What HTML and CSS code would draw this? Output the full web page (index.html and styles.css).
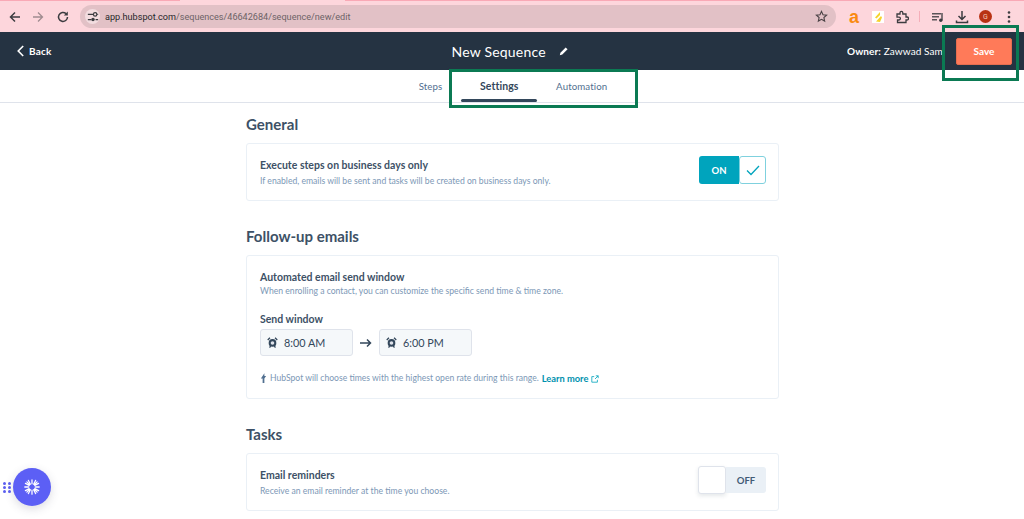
FILE: index.html
```html
<!DOCTYPE html>
<html lang="en">
<head>
<meta charset="utf-8">
<title>New Sequence</title>
<link rel="stylesheet" href="styles.css">
</head>
<body>
<div class="page">
  <header class="chrome">
    <div class="tabstrip"><span class="strip-a"></span><span class="strip-b"></span><span class="strip-c"></span></div>
    <div class="toolbar">
      <svg class="ic back-ic" viewBox="0 0 14 14"><path d="M12 7H2.500M7 2.500 2.500 7 7 11.500" fill="none" stroke="#3c3c40" stroke-width="1.500"/></svg>
      <svg class="ic fwd-ic" viewBox="0 0 14 14"><path d="M2 7h9.500M7 2.500 11.500 7 7 11.500" fill="none" stroke="#a08c90" stroke-width="1.300"/></svg>
      <svg class="ic reload-ic" viewBox="0 0 14 14"><path d="M11.500 7A4.500 4.500 0 1 1 10 3.600" fill="none" stroke="#3c3c40" stroke-width="1.500"/><path d="M11.800 1.500v4h-4z" fill="#3c3c40"/></svg>
      <div class="omnibox">
        <span class="tune">
          <svg viewBox="0 0 14 14" width="12" height="12"><path d="M1 4h6M1 10h4M10 10h3M12 4h1" stroke="#3c3c40" stroke-width="1.500"/><circle cx="9.500" cy="4" r="2" fill="none" stroke="#3c3c40" stroke-width="1.400"/><circle cx="7" cy="10" r="2" fill="#3c3c40"/></svg>
        </span>
        <span class="url"><b>app.hubspot.com</b>/sequences/46642684/sequence/new/edit</span>
        <svg class="star" viewBox="0 0 14 14"><path d="M7 1.500l1.600 3.600 3.900.4-2.900 2.600.8 3.800L7 10l-3.400 1.900.8-3.800L1.500 5.500l3.900-.4z" fill="none" stroke="#4a4245" stroke-width="1.200"/></svg>
      </div>
      <div class="exts">
        <span class="ext-a">a</span>
        <span class="ext-y"><svg viewBox="0 0 12 12" width="12" height="12"><path d="M8 1 3 6.500l1.500 1L8 4zM9 5 4 10.500 8 11l2-4.500z" fill="#f6d32d"/></svg></span>
        <svg class="ic" viewBox="0 0 14 14"><path d="M2 4h3V2.800a1.400 1.400 0 0 1 2.800 0V4H11v3h1a1.500 1.500 0 0 1 0 3h-1v2.500H2.500V10H4a1.400 1.400 0 0 0 0-2.800H2z" fill="none" stroke="#3c3c40" stroke-width="1.300"/></svg>
        <span class="sep"></span>
        <svg class="ic" viewBox="0 0 14 14"><path d="M1 3h9v1.500H1zM1 6h7v1.500H1zM1 9h5v1.500H1z" fill="#5a5458"/><path d="M11 3v7" stroke="#3c3c40" stroke-width="1.300"/><circle cx="9.800" cy="10.300" r="1.700" fill="#3c3c40"/></svg>
        <svg class="ic" viewBox="0 0 14 14"><path d="M7 1v8M3.500 6 7 9.500 10.500 6M1.500 10.500v2h11v-2" fill="none" stroke="#3c3c40" stroke-width="1.500"/></svg>
        <span class="avatar">G</span>
        <svg class="ic dots-ic" viewBox="0 0 14 14"><circle cx="7" cy="2.500" r="1.300" fill="#3c3c40"/><circle cx="7" cy="7" r="1.300" fill="#3c3c40"/><circle cx="7" cy="11.500" r="1.300" fill="#3c3c40"/></svg>
      </div>
    </div>
  </header>

  <nav class="appbar">
    <a class="backlink"><svg viewBox="0 0 10 14" width="9" height="14"><path d="M8 1.500 2.500 7 8 12.500" fill="none" stroke="#fff" stroke-width="1.800"/></svg>Back</a>
    <div class="title">New Sequence
      <svg class="pencil" viewBox="0 0 12 12" width="10" height="10"><path d="M1 11l.7-3L8 1.700l2.300 2.300L4 10.300z" fill="#fff"/></svg>
    </div>
    <div class="owner"><b>Owner:</b> Zawwad Sam</div>
    <button class="save">Save</button>
  </nav>

  <div class="tabs">
    <span class="tab">Steps</span>
    <span class="tab active">Settings</span>
    <span class="tab">Automation</span>
  </div>

  <main class="content">
    <h2>General</h2>
    <section class="card row">
      <div>
        <h3>Execute steps on business days only</h3>
        <p>If enabled, emails will be sent and tasks will be created on business days only.</p>
      </div>
      <div class="toggle on"><span class="label">ON</span><span class="knob"><svg viewBox="0 0 16 16" width="16" height="16"><path d="M2 8.500 6 12.500 14 4" fill="none" stroke="#00a4bd" stroke-width="1.300"/></svg></span></div>
    </section>

    <h2>Follow-up emails</h2>
    <section class="card window">
      <h3>Automated email send window</h3>
      <p>When enrolling a contact, you can customize the specific send time &amp; time zone.</p>
      <label>Send window</label>
      <div class="times">
        <div class="time"><svg viewBox="0 0 12 12" width="11" height="11"><circle cx="6" cy="6.500" r="4.200" fill="#33475b"/><circle cx="6" cy="6.500" r="2" fill="#dfe3eb"/><path d="M.8 3.200 3.200.8M11.200 3.200 8.800.8M2.800 11.500l1.200-1.700M9.200 11.500 8 9.800" stroke="#33475b" stroke-width="1.400"/></svg>8:00 AM</div>
        <svg class="arrow" viewBox="0 0 12 10" width="12" height="10"><path d="M0 5h10.500M7 1.500 10.500 5 7 8.500" fill="none" stroke="#33475b" stroke-width="1.500"/></svg>
        <div class="time"><svg viewBox="0 0 12 12" width="11" height="11"><circle cx="6" cy="6.500" r="4.200" fill="#33475b"/><circle cx="6" cy="6.500" r="2" fill="#dfe3eb"/><path d="M.8 3.200 3.200.8M11.200 3.200 8.800.8M2.800 11.500l1.200-1.700M9.200 11.500 8 9.800" stroke="#33475b" stroke-width="1.400"/></svg>6:00 PM</div>
      </div>
      <p class="hint"><svg viewBox="0 0 8 12" width="7" height="11"><path d="M5 0 1 6h2v5h2V6l2-3H5z" fill="#516f90"/></svg>HubSpot will choose times with the highest open rate during this range. <a>Learn more</a> <svg class="ext" viewBox="0 0 10 10" width="8" height="8"><path d="M4 2H1v7h7V6M5 5l4-4M6 1h3v3" fill="none" stroke="#00a4bd" stroke-width="1"/></svg></p>
    </section>

    <h2>Tasks</h2>
    <section class="card row">
      <div>
        <h3>Email reminders</h3>
        <p>Receive an email reminder at the time you choose.</p>
      </div>
      <div class="toggle off"><span class="knob"></span><span class="label">OFF</span></div>
    </section>
  </main>

  <div class="frame frame-tabs"></div>
  <div class="frame frame-save"></div>

  <div class="grip"><i></i><i></i><i></i><i></i><i></i><i></i></div>
  <div class="fab"><svg viewBox="0 0 20 20" width="16" height="16"><g stroke="#fff" stroke-width="1.600" stroke-linecap="round"><path d="M10 1v5M10 14v5M1 10h5M14 10h5M3.600 3.600 7 7M13 13l3.400 3.400M16.400 3.600 13 7M7 13l-3.400 3.400M5.500 1.800 8 6.500M12 13.500l2.500 4.700M14.500 1.800 12 6.500M8 13.500l-2.500 4.700M1.800 5.500 6.500 8M13.500 12l4.700 2.500M18.200 5.500 13.500 8M6.500 12l-4.700 2.500"/></g></svg></div>
</div>
</body>
</html>
```
FILE: styles.css
```css
* { box-sizing: border-box; }
html, body { margin: 0; padding: 0; background: #fff; }
body { font-family: "Lato", "Liberation Sans", sans-serif; color: #33475b; }
.page { position: relative; width: 1024px; height: 519px; overflow: hidden; background: #fff; }

.chrome { height: 32px; background: #fdd6dc; }
.tabstrip { display: flex; height: 1px; }
.strip-a { width: 180px; background: #f9a9b6; }
.strip-b { width: 165px; background: #fdd6dc; }
.strip-c { flex: 1; background: #f9a9b6; }
.toolbar { display: flex; align-items: center; height: 31px; padding: 0 7px 0 8px; }
.ic { width: 14px; height: 14px; flex: none; }
.fwd-ic { margin-left: 9px; }
.reload-ic { margin-left: 11px; }
.omnibox { display: flex; align-items: center; width: 756px; height: 23px; margin-left: 10px; padding: 0 8px 0 5px; border-radius: 12px; background: #e2c1c6; }
.tune { display: flex; align-items: center; justify-content: center; width: 15px; height: 15px; border-radius: 50%; background: #f3dde0; }
.url { flex: 1; margin-left: 5px; font-family: "Roboto", sans-serif; font-size: 9.100px; color: #6d6367; }
.url b { font-weight: 400; color: #27272a; }
.star { width: 13px; height: 13px; }
.exts { display: flex; align-items: center; margin-left: 11px; }
.ext-a { width: 14px; font-family: "Liberation Sans", sans-serif; font-size: 18px; font-weight: 700; line-height: 16px; text-align: center; color: #f98a10; }
.ext-y { display: flex; width: 12px; height: 12px; margin-left: 11px; background: #fff; }
.exts .ic { margin-left: 0; }
.ext-y + .ic { margin-left: 11px; }
.sep { width: 1px; height: 11px; margin: 0 11px 0 10px; background: #f5aeb9; }
.sep + .ic + .ic { margin-left: 10px; }
.avatar { display: flex; align-items: center; justify-content: center; width: 13px; height: 13px; margin-left: 10px; border-radius: 50%; background: #b83213; font-family: "Roboto", sans-serif; font-size: 7px; color: #f6c9b8; }
.dots-ic { margin-left: 10px !important; }

.appbar { display: flex; align-items: center; position: relative; height: 38px; padding: 0 12px 0 16px; background: #253342; color: #fff; }
.backlink { display: flex; align-items: center; gap: 4px; font-size: 10px; font-weight: 700; letter-spacing: .2px; color: #fff; }
.title { display: flex; align-items: center; gap: 13px; margin-left: 400px; font-size: 14px; letter-spacing: .2px; }
.owner { margin-left: auto; width: 95px; overflow: hidden; white-space: nowrap; font-size: 10px; letter-spacing: .1px; }
.save { width: 56px; height: 27px; margin-left: 14px; padding: 0; border: 1px solid #e66e50; border-radius: 2px; background: #ff7a59; font: 700 10px "Lato", sans-serif; color: #fff; }

.tabs { display: flex; justify-content: center; align-items: center; gap: 37.500px; height: 33px; padding-left: 2px; border-bottom: 1px solid #dfe3eb; background: #fff; }
.tab { position: relative; font-size: 9.700px; color: #516f90; letter-spacing: .1px; }
.tab.active { font-size: 10.500px; font-weight: 700; color: #33475b; }
.tab.active::after { content: ""; position: absolute; left: -19px; right: -18px; bottom: -10px; height: 3px; border-radius: 2px; background: #33475b; }

.content { width: 533px; margin-left: 246px; }
h2 { margin: 0; font-size: 15px; line-height: 18px; font-weight: 700; color: #3d5166; }
.content > h2:first-child { margin-top: 12px; }
.content > h2 { margin-bottom: 10px; }
.card { border: 1px solid #eaf0f6; border-radius: 3px; background: #fff; margin-bottom: 26px; }
.row { display: flex; justify-content: space-between; align-items: center; height: 58px; padding: 0 12px 0 13px; }
h3 { margin: 0; font-size: 10.500px; line-height: 14px; font-weight: 700; color: #3d5166; }
.card p { margin: 3px 0 0; font-size: 8.650px; line-height: 11px; color: #7c98b6; }
.toggle { display: flex; height: 28px; margin-bottom: 4px; font-size: 9.500px; font-weight: 700; }
.toggle.on { width: 67px; }
.toggle.off { width: 68px; }
.toggle .label { display: flex; align-items: center; justify-content: center; }
.toggle.on .label { width: 40px; border-radius: 3px 0 0 3px; background: #00a4bd; color: #fff; }
.toggle.on .knob { display: flex; align-items: center; justify-content: center; width: 27px; border: 1.500px solid #7fd1de; border-radius: 3px; background: #fff; }
.toggle.off .knob { width: 28px; border: 1px solid #dfe3eb; border-radius: 3px; background: #fff; box-shadow: 0 2px 4px rgba(45,62,80,.12); }
.toggle.off .label { flex: 1; margin: 1px 0; border-radius: 0 3px 3px 0; background: #eaf0f6; color: #425b76; }

.window { height: 144px; padding: 14px 13px 0; }
.window > p { margin-top: 1px; }
label { display: block; margin-top: 16px; font-size: 10.500px; line-height: 14px; font-weight: 700; color: #3d5166; }
.times { display: flex; align-items: center; margin-top: 3px; }
.time { display: flex; align-items: center; gap: 6px; width: 93px; height: 27px; padding-left: 6px; border: 1px solid #dfe3eb; border-radius: 3px; background: #f5f8fa; font-size: 10.800px; color: #33475b; }
.arrow { margin: 0 7px; }
.card p.hint { display: flex; align-items: center; gap: 3px; margin-top: 17px; font-size: 8.600px; color: #7c98b6; }
.hint a { font-size: 9.300px; font-weight: 700; color: #0091ae; }

.frame { position: absolute; border: 3px solid #0b7a53; pointer-events: none; }
.frame-tabs { left: 449px; top: 69px; width: 189px; height: 39px; }
.frame-save { left: 942px; top: 25px; width: 77px; height: 56px; }

.grip { position: absolute; left: 3px; top: 482px; display: grid; grid-template-columns: 3px 3px; gap: 1px 2px; }
.grip i { width: 3px; height: 3px; border-radius: 50%; background: #5c5ff0; }
.fab { position: absolute; left: 13px; top: 468px; display: flex; align-items: center; justify-content: center; width: 38px; height: 38px; border-radius: 50%; background: #5c5ff5; box-shadow: 0 3px 10px rgba(60,60,90,.18); }
```
